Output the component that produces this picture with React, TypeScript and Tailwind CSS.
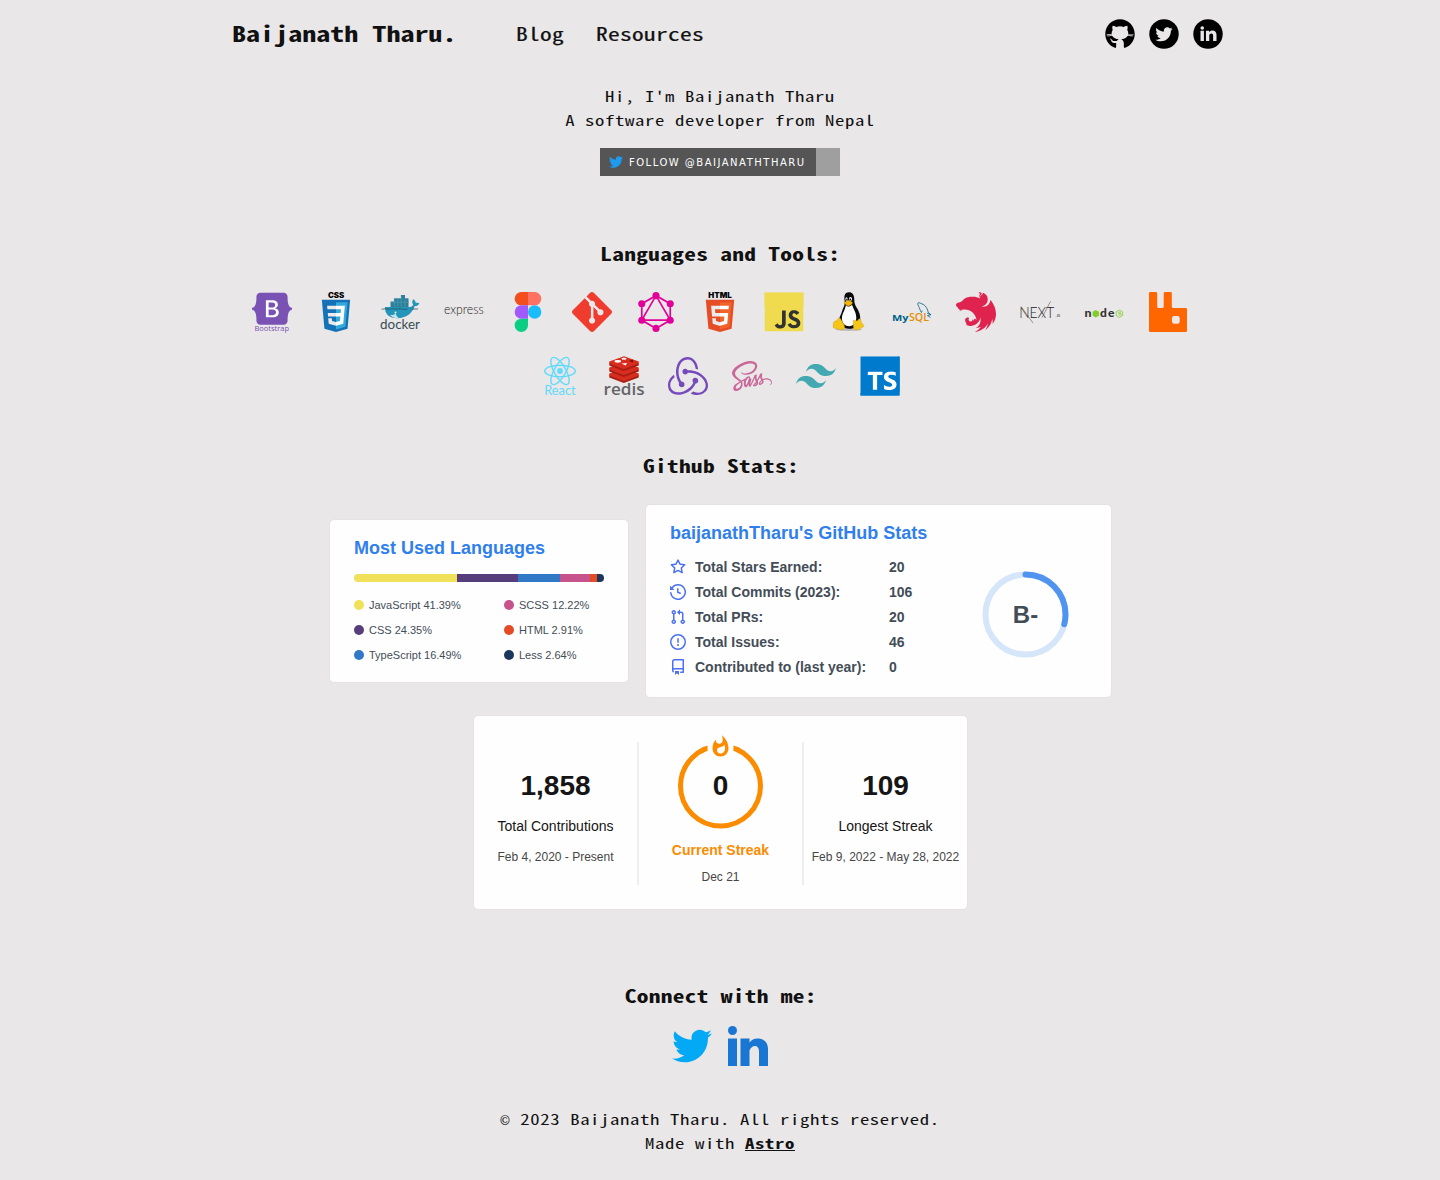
import React from "react";
import { SiBootstrap, SiGit, SiGraphql, SiJavascript, SiNestjs, SiRedux, SiTailwindcss, SiTypescript } from "react-icons/si";
import { FaTwitter, FaSass } from "react-icons/fa";

const SANS = "font-['Liberation_Sans',Arial,sans-serif]";

/* The CJK mono face is condensed, so its text is widened horizontally with scale-x. */
const MONO = "font-['Noto_Sans_Mono_CJK_JP','Noto_Sans_Mono_CJK_SC','Liberation_Mono',monospace]";

function Tool({ children }: { children: React.ReactNode }) {
  return (
    <svg viewBox="0 0 40 40" className="h-10 w-10 shrink-0 overflow-visible">
      {children}
    </svg>
  );
}

function Bootstrap() {
  return (
    <Tool>
      <rect x="9" y="6" width="20" height="22" fill="#fff" />
      <g transform="translate(0 -3.2) scale(1.667)">
        <SiBootstrap x={0} y={0} size={24} color="#7952b3" />
      </g>
      <text x="2.5" y="38.6" fontSize="8" textLength="34.5" lengthAdjust="spacingAndGlyphs" fill="#7952b3" fontFamily="Open Sans, sans-serif">Bootstrap</text>
    </Tool>
  );
}

function Css3() {
  return (
    <Tool>
      <g transform="translate(5.8 0) scale(0.1108)">
        <path fill="#1572b6" d="M127.844 360.088L23.662 331.166.445 70.766h255.11l-23.241 260.36z" />
        <path fill="#33a9dc" d="M212.417 314.547l19.86-222.49H128V337.95z" />
        <path fill="#ebebeb" d="M53.669 188.636l2.862 31.937H128v-31.937zM47.917 123.995l2.903 31.937H128v-31.937zM128 271.58l-.14.037-35.568-9.604-2.274-25.471h-32.06l4.474 50.146 65.421 18.16.147-.04z" />
        <path fill="#fff" d="M202.127 188.636l5.765-64.641H127.89v31.937h45.002l-2.906 32.704H127.89v31.937h39.327l-3.708 41.42-35.62 9.614v33.226l65.473-18.145.48-5.396 7.506-84.08z" />
      </g>
      <text x="11.9" y="5.5" fontSize="7.4" fontWeight="900" textLength="16.4" lengthAdjust="spacingAndGlyphs" fontFamily="Inter, sans-serif">CSS</text>
    </Tool>
  );
}

function Docker() {
  return (
    <Tool>
      <g fill="#2b7f98">
        <rect x="10.500" y="9.500" width="18" height="5.500" />
        <rect x="14" y="6.300" width="14.500" height="4" />
        <rect x="21" y="3" width="4" height="4" />
      </g>
      <path d="M14.300 6.500v8M17.800 6.500v8M21.200 3v12M25 7v8M11 10.200h17" stroke="#5ba9bd" strokeWidth=".5" fill="none" />
      <path fill="#2395b8" d="M5 15h24.500c2 0 3.500-1 3.600-2.400-1.200-1.600-1-3.800.2-5.400 1.800 1 2.300 2.400 2.400 3.600 1.300-.3 2.600-.2 3.600.4-.6 1.800-2 2.800-4.500 2.900C32 21.700 26 26.200 17.500 26.200 9 26.200 4.600 22 5 15z" />
      <path fill="#c6e4ea" d="M10 22.800c2 .8 4.500 0 5.800-1.200.4 2 1.500 3.600 3.400 4.600-4.400.4-7.300-.7-9.200-3.400z" />
      <circle cx="15.500" cy="20.500" r="1" fill="#e7f5f8" />
      <path d="M1.500 17c2 .6 3-.7 5-.2s3.500.5 5 0 3 .6 5 .3 3-.6 5-.1 4 .6 6 0M32 17h6" fill="none" stroke="#254b58" strokeWidth=".7" />
      <text x="0" y="36.600" fontSize="13" textLength="40" lengthAdjust="spacingAndGlyphs" fill="#394d54" fontFamily="Lato, sans-serif">docker</text>
    </Tool>
  );
}

function Express() {
  return (
    <Tool>
      <text x="0" y="22.400" fontSize="13.500" fontWeight="300" textLength="39.600" lengthAdjust="spacingAndGlyphs" fill="#222" fontFamily="Lato, sans-serif">express</text>
    </Tool>
  );
}

function Figma() {
  return (
    <Tool>
      <path fill="#f24e1e" d="M20 0v13.330h-6.670a6.665 6.665 0 0 1 0-13.330z" />
      <path fill="#ff7262" d="M20 0h6.670a6.665 6.665 0 0 1 0 13.330H20z" />
      <path fill="#a259ff" d="M20 13.330v13.330h-6.670a6.665 6.665 0 0 1 0-13.330z" />
      <circle cx="26.670" cy="20" r="6.670" fill="#1abcfe" />
      <path fill="#0acf83" d="M20 26.670v6.660a6.670 6.670 0 1 1-6.670-6.660z" />
    </Tool>
  );
}

function Html5() {
  return (
    <Tool>
      <g transform="scale(0.078125)">
        <path fill="#e44d26" d="M107.600 471l-33-370.400h362.800l-33 370.200L255.700 512" />
        <path fill="#f16529" d="M256 480.500V131h148.300L376 447" />
        <path fill="#ebebeb" d="M142 176.300h114v45.400h-64.200l4.200 46.500h60v45.300H154.400M156.400 336.300H202l3.200 36.300 50.800 13.600v47.400l-93.200-26" />
        <path fill="#fff" d="M369.600 176.300H255.800v45.400h109.600M361.300 268.200H255.800v45.400h56l-5.300 59-50.700 13.600v47.200l93-25.800" />
      </g>
      <text x="8.300" y="5.500" fontSize="7.400" fontWeight="900" textLength="23.400" lengthAdjust="spacingAndGlyphs" fontFamily="Inter, sans-serif">HTML</text>
    </Tool>
  );
}

function Linux() {
  return (
    <Tool>
      <g transform="translate(3.200 0) scale(.88 1)">
        <ellipse cx="20" cy="37.500" rx="15" ry="1.500" fill="#bdbbbc" />
        <path fill="#0b0b0b" d="M20.300.3c3.700 0 5.900 2.600 5.900 6.700 0 4 .7 5.700 3.200 9.300 2.300 3.400 4.400 8 3.400 12.600-1 4.500-6 7.800-12.500 7.800s-11.800-4-11.300-8.700c.3-3.600 2.300-5.500 3.400-9 1.300-3.700 3-5 3-8.500-.2-3.200-.8-5-.2-7C15.900 1.500 17.700.3 20.300.3z" />
        <path fill="#fff" d="M16.700 13.300c1.700 1.700 4.500 1.700 7-.6 1 3.500 4.800 7.300 4.800 13 0 4.800-3.300 8.500-8 8.500-4.500 0-8.300-3-8.300-7.500 0-5.200 3.500-8.200 4.500-13.400z" />
        <ellipse cx="17.400" cy="7" rx="1.300" ry="1.700" fill="#fff" />
        <ellipse cx="22" cy="6.900" rx="1.700" ry="1.900" fill="#fff" />
        <circle cx="17.700" cy="7.300" r=".8" />
        <circle cx="21.800" cy="7.300" r=".9" />
        <path fill="#f3b70a" stroke="#a87600" strokeWidth=".3" d="M14.800 10.500c1-.5 2.900-2.300 4.400-2.300s3.800 1.500 5.100 2.300c-.3 1.700-2.600 3.200-4.500 3.600-2 0-4-1.800-5-3.600z" />
        <path fill="#f5c518" stroke="#b98900" strokeWidth=".3" d="M8 26.300c1.700-1 2.800.4 4 2.500 1.500 2.500 3.500 4.500 3.300 6.500-.3 2.400-2.700 3-5.300 2.300-2.800-.7-6-.8-7.500-1.900-.9-1 .1-2.800 0-4.400-.1-1.700 1.300-2 2.700-2.300 1.600-.4 1.400-1.800 2.800-2.700zM25.300 28c1-.5 1.600 1 3.500.8 2-.2 2.200-2.500 3.700-2 1.500.4 1.200 2.600 2 4 .8 1.300 2.800 1.800 2.700 3-.2 1.600-3.300 2-5.300 3.300-2 1.200-4.500 1.700-6-.2-1.400-2-.6-5-.8-7-.1-.9-.2-1.600.2-1.900z" />
      </g>
    </Tool>
  );
}

function MySql() {
  return (
    <Tool>
      <text x="0" y="28.600" fontSize="9.600" fontWeight="700" textLength="16.500" lengthAdjust="spacingAndGlyphs" fill="#00618a" fontFamily="Open Sans, sans-serif">My</text>
      <text x="17" y="28.600" fontSize="10" fontWeight="600" textLength="20" lengthAdjust="spacingAndGlyphs" fill="#e48e00" fontFamily="Open Sans, sans-serif">SQL</text>
      <path d="M29.500 20.500c-.9-.6-1.300-2.800-2.300-5-.8-1.700-2-3.600-1.200-4.600 1-.8 2.500.6 4 1 2.500.7 4.200 3 5.200 5 .7 1.500.5 2.600 1.500 3.800.8 1 1.700 1.200 2.300 2.200M35 21c1 .4 3 1.400 4 1.700-1 .4-2.500.2-3.500 1 1.300.5 2 1 3 2M29.500 20.500c.3-.5.4-1.300.6-1.800" fill="none" stroke="#00618a" strokeWidth=".8" />
    </Tool>
  );
}

function Next() {
  return (
    <Tool>
      <text x="-.8" y="25.500" fontSize="16.500" fontWeight="300" textLength="35" lengthAdjust="spacingAndGlyphs" fill="#222" fontFamily="Lato, sans-serif">NEXT</text>
      <text x="35.500" y="25.300" fontSize="4" textLength="4.600" lengthAdjust="spacingAndGlyphs" fill="#222" fontFamily="Lato, sans-serif">.JS</text>
      <path d="M1 14.500L13 31M22 25.500L30.500 9.500" stroke="#555" strokeWidth=".6" />
    </Tool>
  );
}

function Node() {
  return (
    <Tool>
      <g fill="#333" fontFamily="Lato, sans-serif" fontWeight="900" fontSize="12">
        <text x=".6" y="25.200" textLength="7" lengthAdjust="spacingAndGlyphs">n</text>
        <text x="16" y="25.200" textLength="14.400">de</text>
      </g>
      <path fill="#83cd29" d="M11.800 18l3.200 1.850v3.900l-3.200 1.850-3.200-1.850v-3.900z" />
      <path fill="none" stroke="#83cd29" strokeWidth=".8" d="M35.400 18l3.200 1.850v3.700l-3.200 1.850-3.200-1.850v-3.700zM37 20.500c-1-.7-2.700-.5-2.700.3 0 1 3 .4 3 1.500 0 1-2.300 1-3 .2" />
    </Tool>
  );
}

function RabbitMq() {
  return (
    <Tool>
      <path
        fill="#ff6600"
        fillRule="evenodd"
        d="M2.300 0h5.600q1.300 0 1.300 1.300V14.500q0 1.500 1.500 1.500h3.500q1.500 0 1.500-1.500V1.300Q15.700 0 17 0h5.500q1.300 0 1.300 1.300V14.500q0 1.500 1.500 1.500h12.400q1.300 0 1.300 1.300v21.400q0 1.300-1.300 1.300H2.300Q1 40 1 38.700V1.300Q1 0 2.300 0zM26.200 24q-2.200 0-2.200 2.200v3.300q0 2.200 2.200 2.200h3.300q2.200 0 2.200-2.200v-3.300q0-2.200-2.200-2.200z"
      />
    </Tool>
  );
}

function ReactLogo() {
  return (
    <Tool>
      <g fill="none" stroke="#61dafb" strokeWidth="1.400">
        <ellipse cx="20" cy="15" rx="15.300" ry="5.800" />
        <ellipse cx="20" cy="15" rx="15.300" ry="5.800" transform="rotate(60 20 15)" />
        <ellipse cx="20" cy="15" rx="15.300" ry="5.800" transform="rotate(120 20 15)" />
      </g>
      <circle cx="20" cy="15" r="2.900" fill="#61dafb" />
      <text x="4.200" y="39.200" fontSize="12.500" textLength="31.500" lengthAdjust="spacingAndGlyphs" fill="#61dafb" fontFamily="Lato, sans-serif">React</text>
    </Tool>
  );
}

function Redis() {
  return (
    <Tool>
      {[12, 6, 0].map((y) => (
        <g key={y} transform={`translate(0 ${y})`}>
          <path fill="#a41e11" d="M5.300 6.500v3l14.500 5.500L34.700 9.500v-3L19.800 12z" />
          <path fill="#d82c20" d="M5.300 5.500L20 .3l14.700 5.200v2L19.800 13.200 5.300 7.500z" />
        </g>
      ))}
      <ellipse cx="13.800" cy="5.300" rx="3.400" ry="1.400" fill="#fff" />
      <path fill="#fff" d="M20 1.200l.7.900 2.500.2-1.800.8.5 1.100-2-.6-2 .4.500-1-1.600-.8 2.400-.2zM17.500 7.500l5.500-.6-1.300 2.600z" />
      <path fill="#7a0c00" d="M25 5l4-1.500V6.500z" />
      <text x="-.5" y="38.800" fontSize="17" fontWeight="600" textLength="41" lengthAdjust="spacingAndGlyphs" fill="#636466" fontFamily="Open Sans, sans-serif">redis</text>
    </Tool>
  );
}

const toolsTop = [
  <Bootstrap />, <Css3 />, <Docker />, <Express />, <Figma />,
  <SiGit size={40} color="#f03c2e" />,
  <SiGraphql size={40} color="#e10098" />,
  <Html5 />,
  <Tool><rect x="1" y="1" width="38" height="38" fill="#323330" /><path fill="#f0db4f" d="M.5.500h39v14H.500z" /><SiJavascript x={0.5} y={0.5} size={39} color="#f0db4f" /></Tool>,
  <Linux />, <MySql />,
  <SiNestjs size={40} color="#e0234e" />,
  <Next />, <Node />, <RabbitMq />,
];

const toolsBottom = [
  <ReactLogo />, <Redis />,
  <SiRedux size={40} color="#764abc" />,
  <FaSass size={40} color="#cb6699" />,
  <SiTailwindcss size={40} color="#44a8b3" />,
  <Tool>
    <rect x=".5" y=".5" width="39" height="39" fill="#007acc" />
    <g transform="translate(1.800 .3) scale(.96 .93)">
      <rect x="6" y="16" width="31" height="22.500" fill="#fff" />
      <SiTypescript x={0.5} y={0.5} size={39} color="#007acc" />
    </g>
    <path d="M.5 37h39v2.500H.5zM37.800.5h1.700v39h-1.700z" fill="#007acc" />
  </Tool>,
];

const languages = [
  { name: "JavaScript", share: 41.39, color: "#f1e05a" },
  { name: "CSS", share: 24.35, color: "#563d7c" },
  { name: "TypeScript", share: 16.49, color: "#3178c6" },
  { name: "SCSS", share: 12.22, color: "#c6538c" },
  { name: "HTML", share: 2.91, color: "#e34c26" },
  { name: "Less", share: 2.64, color: "#1d365d" },
];

const stats = [
  { label: "Total Stars Earned:", value: "20", d: "M8 .25a.75.75 0 01.673.418l1.882 3.815 4.21.612a.75.75 0 01.416 1.279l-3.046 2.97.719 4.192a.75.75 0 01-1.088.791L8 12.347l-3.766 1.98a.75.75 0 01-1.088-.79l.72-4.194L.818 6.374a.75.75 0 01.416-1.28l4.21-.611L7.327.668A.75.75 0 018 .25zm0 2.445L6.615 5.5a.75.75 0 01-.564.41l-3.097.45 2.24 2.184a.75.75 0 01.216.664l-.528 3.084 2.769-1.456a.75.75 0 01.698 0l2.77 1.456-.53-3.084a.75.75 0 01.216-.664l2.24-2.183-3.096-.45a.75.75 0 01-.564-.41L8 2.694v.001z" },
  { label: "Total Commits (2023):", value: "106", d: "M1.643 3.143L.427 1.927A.25.25 0 000 2.104V5.75c0 .138.112.25.25.25h3.646a.25.25 0 00.177-.427L2.715 4.215a6.5 6.5 0 11-1.18 4.458.75.75 0 10-1.493.154 8.001 8.001 0 101.6-5.684zM7.75 4a.75.75 0 01.75.75v2.992l2.028.812a.75.75 0 01-.557 1.392l-2.5-1A.75.75 0 017 8.25v-3.5A.75.75 0 017.75 4z" },
  { label: "Total PRs:", value: "20", d: "M7.177 3.073L9.573.677A.25.25 0 0110 .854v4.792a.25.25 0 01-.427.177L7.177 3.427a.25.25 0 010-.354zM3.75 2.5a.75.75 0 100 1.5.75.75 0 000-1.5zm-2.25.75a2.25 2.25 0 113 2.122v5.256a2.251 2.251 0 11-1.5 0V5.372A2.25 2.25 0 011.5 3.25zM11 2.5h-1V4h1a1 1 0 011 1v5.628a2.251 2.251 0 101.5 0V5A2.5 2.5 0 0011 2.5zm1 10.25a.75.75 0 111.5 0 .75.75 0 01-1.5 0zM3.75 12a.75.75 0 100 1.5.75.75 0 000-1.5z" },
  { label: "Total Issues:", value: "46", d: "M8 1.5a6.5 6.5 0 100 13 6.5 6.5 0 000-13zM0 8a8 8 0 1116 0A8 8 0 010 8zm9 3a1 1 0 11-2 0 1 1 0 012 0zm-.25-6.25a.75.75 0 00-1.5 0v3.5a.75.75 0 001.5 0v-3.5z" },
  { label: "Contributed to (last year):", value: "0", d: "M2 2.5A2.5 2.5 0 014.5 0h8.75a.75.75 0 01.75.75v12.5a.75.75 0 01-.75.75h-2.5a.75.75 0 110-1.5h1.75v-2h-8a1 1 0 00-.714 1.7.75.75 0 01-1.072 1.05A2.495 2.495 0 012 11.5v-9zm10.5-1V9h-8c-.356 0-.694.074-1 .208V2.5a1 1 0 011-1h8zM5 12.25v3.25a.25.25 0 00.4.2l1.45-1.087a.25.25 0 01.3 0L8.6 15.7a.25.25 0 00.4-.2v-3.25a.25.25 0 00-.25-.25h-3.5a.25.25 0 00-.25.25z" },
];

const GITHUB =
  "M17.791,46.836C18.502,46.53,19,45.823,19,45v-5.4c0-0.197,0.016-0.402,0.041-0.61C19.027,38.994,19.014,38.997,19,39 c0,0-3,0-3.6,0c-1.5,0-2.8-0.6-3.4-1.8c-0.7-1.3-1-3.5-2.8-4.7C8.9,32.3,9.1,32,9.7,32c0.6,0.1,1.9,0.9,2.7,2c0.9,1.1,1.8,2,3.4,2 c2.487,0,3.82-0.125,4.622-0.555C21.356,34.056,22.649,33,24,33v-0.025c-5.668-0.182-9.289-2.066-10.975-4.975 c-3.665,0.042-6.856,0.405-8.677,0.707c-0.058-0.327-0.108-0.656-0.151-0.987c1.797-0.296,4.843-0.647,8.345-0.714 c-0.112-0.276-0.209-0.559-0.291-0.849c-3.511-0.178-6.541-0.039-8.187,0.097c-0.02-0.332-0.047-0.663-0.051-0.999 c1.649-0.135,4.597-0.27,8.018-0.111c-0.079-0.5-0.13-1.011-0.13-1.543c0-1.7,0.6-3.5,1.7-5c-0.5-1.7-1.2-5.3,0.2-6.6 c2.7,0,4.6,1.3,5.5,2.1C21,13.4,22.9,13,25,13s4,0.4,5.6,1.1c0.9-0.8,2.8-2.1,5.5-2.1c1.5,1.4,0.7,5,0.2,6.6c1.1,1.5,1.7,3.2,1.6,5 c0,0.484-0.045,0.951-0.11,1.409c3.499-0.172,6.527-0.034,8.204,0.102c-0.002,0.337-0.033,0.666-0.051,0.999 c-1.671-0.138-4.775-0.28-8.359-0.089c-0.089,0.336-0.197,0.663-0.325,0.98c3.546,0.046,6.665,0.389,8.548,0.689 c-0.043,0.332-0.093,0.661-0.151,0.987c-1.912-0.306-5.171-0.664-8.879-0.682C35.112,30.873,31.557,32.75,26,32.969V33 c2.6,0,5,3.9,5,6.6V45c0,0.823,0.498,1.53,1.209,1.836C41.37,43.804,48,35.164,48,25C48,12.318,37.683,2,25,2S2,12.318,2,25 C2,35.164,8.63,43.804,17.791,46.836z";

function Header() {
  return (
    <header className="mx-auto flex h-[68px] w-[1008px] items-center pl-4">
      <a className="w-[284px] pb-0.5">
        <span className="inline-block origin-left scale-x-130 whitespace-nowrap text-[21.6px] font-bold">Baijanath Tharu.</span>
      </a>
      <nav className="flex gap-8 pb-0.5 text-[18px] tracking-[0.23px]">
        <a className="w-12"><span className="inline-block origin-left scale-x-130 [-webkit-text-stroke:0.2px]">Blog</span></a>
        <a className="w-[108px]"><span className="inline-block origin-left scale-x-130 [-webkit-text-stroke:0.2px]">Resources</span></a>
      </nav>
      <div className="ml-auto flex gap-3">
        <svg viewBox="0 0 50 50" className="h-8 w-8"><path d={GITHUB} /></svg>
        <svg viewBox="0 0 50 50" className="h-8 w-8">
          <circle cx="25" cy="25" r="23" />
          <FaTwitter x={11.5} y={12} size={27} color="#e9e7e8" />
        </svg>
        <svg viewBox="0 0 50 50" className="h-8 w-8">
          <circle cx="25" cy="25" r="23" />
          <g fill="#e9e7e8">
            <circle cx="16" cy="15.500" r="2.800" />
            <path d="M13.300 20h5.300v16h-5.300zM21.800 20h5v2.300c1.200-1.900 3-2.700 5.200-2.700 4.200 0 6.300 2.500 6.300 6.900V36H33v-8.500c0-2.300-1-3.400-2.800-3.400-2 0-3.200 1.300-3.200 3.600V36h-5.200z" />
          </g>
        </svg>
      </div>
    </header>
  );
}

function SectionTitle({ children, className }: { children: string; className: string }) {
  return (
    <h2 className={`h-7 pl-px text-center text-[18px] font-bold leading-[26px] tracking-[0.23px] ${className}`}>
      <span className="inline-block scale-x-130">{children}</span>
    </h2>
  );
}

function LanguagesCard() {
  return (
    <div className={`${SANS} h-[164px] w-[300px] shrink-0 rounded-[5px] border border-[#e4e2e2] bg-[#fffefe] pl-6 pt-[18px]`}>
      <h3 className="text-[18px] font-semibold leading-5 text-[#2f80ed]">Most Used Languages</h3>
      <div className="mt-4 flex h-2 w-[250px] overflow-hidden rounded-[5px]">
        {languages.map((l) => (
          <div key={l.name} style={{ width: `${l.share}%`, backgroundColor: l.color }} />
        ))}
      </div>
      <div className="mt-2.5 grid w-[300px] grid-flow-col grid-cols-2 grid-rows-[25px_25px_25px]">
        {languages.map((l) => (
          <div key={l.name} className="flex items-center gap-[5px] text-[11px] text-[#434d58]">
            <span className="h-2.5 w-2.5 rounded-full" style={{ backgroundColor: l.color }} />
            <span className="pt-px">{l.name} {l.share}%</span>
          </div>
        ))}
      </div>
    </div>
  );
}

function StatsCard() {
  return (
    <div className={`${SANS} h-[194px] w-[467px] shrink-0 rounded-[5px] border border-[#e4e2e2] bg-[#fffefe] pl-6 pt-[18px]`}>
      <h3 className="text-[18px] font-semibold leading-5 text-[#2f80ed]">baijanathTharu's GitHub Stats</h3>
      <div className="mt-[11px] flex">
        <div className="w-[312px]">
          {stats.map((s) => (
            <div key={s.label} className="flex h-[25px] items-center text-[14px] font-bold text-[#434d58]">
              <svg viewBox="0 0 16 16" className="h-4 w-4" fill="#4c71f2" fillRule="evenodd"><path d={s.d} /></svg>
              <span className="ml-[9px] w-[194px] pt-0.5">{s.label}</span>
              <span className="pt-0.5">{s.value}</span>
            </div>
          ))}
        </div>
        <svg viewBox="0 0 88 88" className="-ml-px mt-4 h-[88px] w-[88px] overflow-visible">
          <g transform="translate(.5 .5)">
            <circle cx="44" cy="44" r="40" fill="none" stroke="#2f80ed" strokeWidth="6" opacity=".2" />
            <circle cx="44" cy="44" r="40" fill="none" stroke="#2f80ed" strokeWidth="6" opacity=".8" strokeLinecap="round" strokeDasharray="72.500 251.300" transform="rotate(-90 44 44)" />
            <text x="44" y="52" textAnchor="middle" fontSize="24" fontWeight="800" fill="#434d58">B-</text>
          </g>
        </svg>
      </div>
    </div>
  );
}

function StreakCard() {
  return (
    <div className={`${SANS} mx-auto mt-[17px] flex h-[195px] w-[495px] rounded-[5px] border border-[#e4e2e2] bg-[#fffefe] text-center text-[#151515]`}>
      <div className="w-[163px] pl-px pt-[52px]">
        <div className="text-[28px] font-bold leading-9">1,858</div>
        <div className="mt-3 text-[14px] leading-5">Total Contributions</div>
        <div className="mt-3 text-[12px] leading-[18px] text-[#464646]">Feb 4, 2020 - Present</div>
      </div>
      <div className="mt-[26px] h-[143px] w-0.5 bg-[#efeeee]" />
      <div className="w-[163px]">
        <svg viewBox="0 0 163 120" className="h-[120px] w-[163px]">
          <circle cx="81.500" cy="70" r="40" fill="none" stroke="#fb8c00" strokeWidth="5" />
          <ellipse cx="81.500" cy="31" rx="13" ry="18" fill="#fffefe" />
          <path transform="translate(81.500 18.500)" fill="#fb8c00" fillRule="evenodd" d="M1.500.67C1.500.67 2.240 3.320 2.240 5.470C2.240 7.530.89 9.200-1.170 9.200C-3.230 9.200-4.790 7.530-4.790 5.470L-4.760 5.110C-6.780 7.510-8 10.620-8 13.990C-8 18.410-4.420 22 0 22C4.420 22 8 18.410 8 13.990C8 8.600 5.410 3.790 1.500.67ZM-.29 19C-2.070 19-3.510 17.600-3.510 15.860C-3.510 14.240-2.460 13.100-.7 12.740C1.070 12.380 2.900 11.530 3.920 10.160C4.310 11.450 4.510 12.810 4.510 14.200C4.510 16.850 2.360 19-.29 19Z" />
          <text x="81.500" y="79" textAnchor="middle" fontSize="28" fontWeight="700" fill="#151515">0</text>
        </svg>
        <div className="mt-1 pl-px text-[14px] font-bold leading-5 text-[#fb8c00]">Current Streak</div>
        <div className="mt-2 pl-px text-[12px] leading-[18px] text-[#464646]">Dec 21</div>
      </div>
      <div className="mt-[26px] h-[143px] w-0.5 bg-[#efeeee]" />
      <div className="w-[163px] pl-px pt-[52px]">
        <div className="text-[28px] font-bold leading-9">109</div>
        <div className="mt-3 text-[14px] leading-5">Longest Streak</div>
        <div className="mt-3 whitespace-nowrap text-[12px] leading-[18px] text-[#464646]">Feb 9, 2022 - May 28, 2022</div>
      </div>
    </div>
  );
}

export default function App() {
  return (
    <div className={`${MONO} h-[1180px] overflow-hidden bg-[#e9e7e8] text-[#111]`}>
      <Header />
      <section className="mt-4 scale-x-130 text-center text-[14.4px] leading-6 tracking-[0.49px]">
        <p>Hi, I'm Baijanath Tharu</p>
        <p>A software developer from Nepal</p>
      </section>
      <div className="mx-auto mt-4 flex h-7 w-60 bg-[#9f9f9f]">
        <div className="flex w-[216px] items-center bg-[#555] pl-[9px] text-white">
          <FaTwitter size={14} color="#1d9bf0" className="shrink-0" />
          <span className="ml-1.5 whitespace-nowrap font-['DejaVu_Sans',Verdana,sans-serif] text-[10px] tracking-[1.5px]">FOLLOW @BAIJANATHTHARU</span>
        </div>
      </div>
      <SectionTitle className="mt-16">Languages and Tools:</SectionTitle>
      <div className="mt-6 flex flex-col items-center gap-6">
        <div className="flex gap-6">{toolsTop.map((t, i) => <React.Fragment key={i}>{t}</React.Fragment>)}</div>
        <div className="flex gap-6">{toolsBottom.map((t, i) => <React.Fragment key={i}>{t}</React.Fragment>)}</div>
      </div>
      <SectionTitle className="mt-14">Github Stats:</SectionTitle>
      <div className="mx-auto mt-6 flex w-[782px] items-center gap-4">
        <LanguagesCard />
        <StatsCard />
      </div>
      <StreakCard />
      <SectionTitle className="mt-[72px]">Connect with me:</SectionTitle>
      <div className="mt-4 flex justify-center gap-4">
        <FaTwitter size={40} color="#03a9f4" />
        <svg viewBox="0 0 40 40" className="h-10 w-10" fill="#1976d2">
          <circle cx="4.500" cy="4.500" r="4.500" />
          <path d="M0 12.500h9V40H0zM12.500 12.500h9v4c2-2.800 4.500-4.100 8-4.100 6.500 0 10.500 4 10.500 10.600v17h-9V25c0-3-1.600-5-4-5-2.500 0-4.200 1.700-5.500 4.500V40h-9z" />
        </svg>
      </div>
      <footer className="mt-[41px] scale-x-130 text-center text-[14.4px] leading-6 tracking-[0.49px]">
        <p className="h-6"><span className="font-['Liberation_Mono',monospace] text-[12px] leading-none">©</span> 2023 Baijanath Tharu. All rights reserved.</p>
        <p className="h-6">Made with <a className="font-bold underline">Astro</a></p>
      </footer>
    </div>
  );
}
